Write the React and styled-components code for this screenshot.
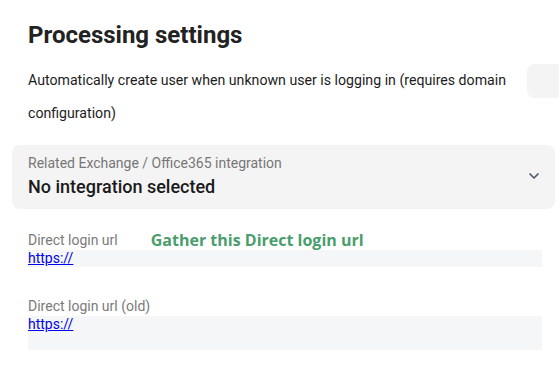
import React from "react";
import styled, { createGlobalStyle } from "styled-components";

const GlobalStyle = createGlobalStyle`
  html, body {
    margin: 0;
    padding: 0;
    background: #ffffff;
    overflow: hidden;
  }
  body {
    font-family: Roboto, "Liberation Sans", Arial, sans-serif;
  }
`;

const Page = styled.div`
  width: 559px;
  height: 376px;
  overflow: hidden;
  box-sizing: border-box;
  padding: 19px 4px 0 12px;
`;

const Title = styled.h1`
  margin: 0;
  padding-left: 16px;
  font-size: 24px;
  line-height: 32px;
  font-weight: 700;
  color: #222222;
`;

const OptionRow = styled.div`
  display: flex;
  align-items: flex-start;
  margin-top: 13px;
  margin-right: -20px;
  padding-left: 16px;
`;

const OptionText = styled.div`
  flex: 1;
  font-size: 14.15px;
  line-height: 33px;
  color: #1c1c1c;
`;

const Toggle = styled.div`
  flex: none;
  width: 48px;
  height: 34px;
  margin-left: 16px;
  border-radius: 8px;
  background: #f4f4f4;
`;

const Select = styled.div`
  display: flex;
  align-items: center;
  margin-top: 15px;
  padding: 8px 15px 10px 16px;
  border-radius: 8px;
  background: #f4f4f4;
`;

const SelectBody = styled.div`
  flex: 1;
`;

const SelectLabel = styled.div`
  font-size: 14px;
  line-height: 20px;
  color: #777777;
`;

const SelectValue = styled.div`
  margin-top: 2px;
  font-size: 18px;
  line-height: 24px;
  font-weight: 500;
  color: #1a1a1a;
`;

const Field = styled.div`
  margin-top: ${(p) => p.$gap}px;
  padding: 0 13px 0 16px;
`;

const FieldHead = styled.div`
  display: flex;
  align-items: baseline;
  gap: 33px;
`;

const FieldLabel = styled.div`
  font-size: 14px;
  line-height: 20px;
  color: #7a7a7a;
`;

const Hint = styled.div`
  position: relative;
  top: 1px;
  font-family: "Open Sans", sans-serif;
  font-size: 16px;
  line-height: 20px;
  font-weight: 700;
  color: #4a9d6c;
`;

const UrlBox = styled.div`
  height: ${(p) => p.$h}px;
  background: #f5f6f8;
  font-size: 14px;
  line-height: 17px;
`;

const UrlLink = styled.a`
  color: #0000ee;
  text-decoration: underline;
`;

const Chevron = () => (
  <svg width="12" height="8" viewBox="0 0 12 8" fill="none">
    <path d="M2 2l4 4 4-4" stroke="#4d5872" strokeWidth="1.7" strokeLinecap="round" strokeLinejoin="round" />
  </svg>
);

export default function App() {
  return (
    <>
      <GlobalStyle />
      <Page>
        <Title>Processing settings</Title>
        <OptionRow>
          <OptionText>
            Automatically create user when unknown user is logging in (requires domain configuration)
          </OptionText>
          <Toggle />
        </OptionRow>
        <Select>
          <SelectBody>
            <SelectLabel>Related Exchange / Office365 integration</SelectLabel>
            <SelectValue>No integration selected</SelectValue>
          </SelectBody>
          <Chevron />
        </Select>
        <Field $gap={20}>
          <FieldHead>
            <FieldLabel>Direct login url</FieldLabel>
            <Hint>Gather this Direct login url</Hint>
          </FieldHead>
          <UrlBox $h={17}>
            <UrlLink href="#">https://</UrlLink>
          </UrlBox>
        </Field>
        <Field $gap={29}>
          <FieldLabel>Direct login url (old)</FieldLabel>
          <UrlBox $h={34}>
            <UrlLink href="#">https://</UrlLink>
          </UrlBox>
        </Field>
      </Page>
    </>
  );
}
